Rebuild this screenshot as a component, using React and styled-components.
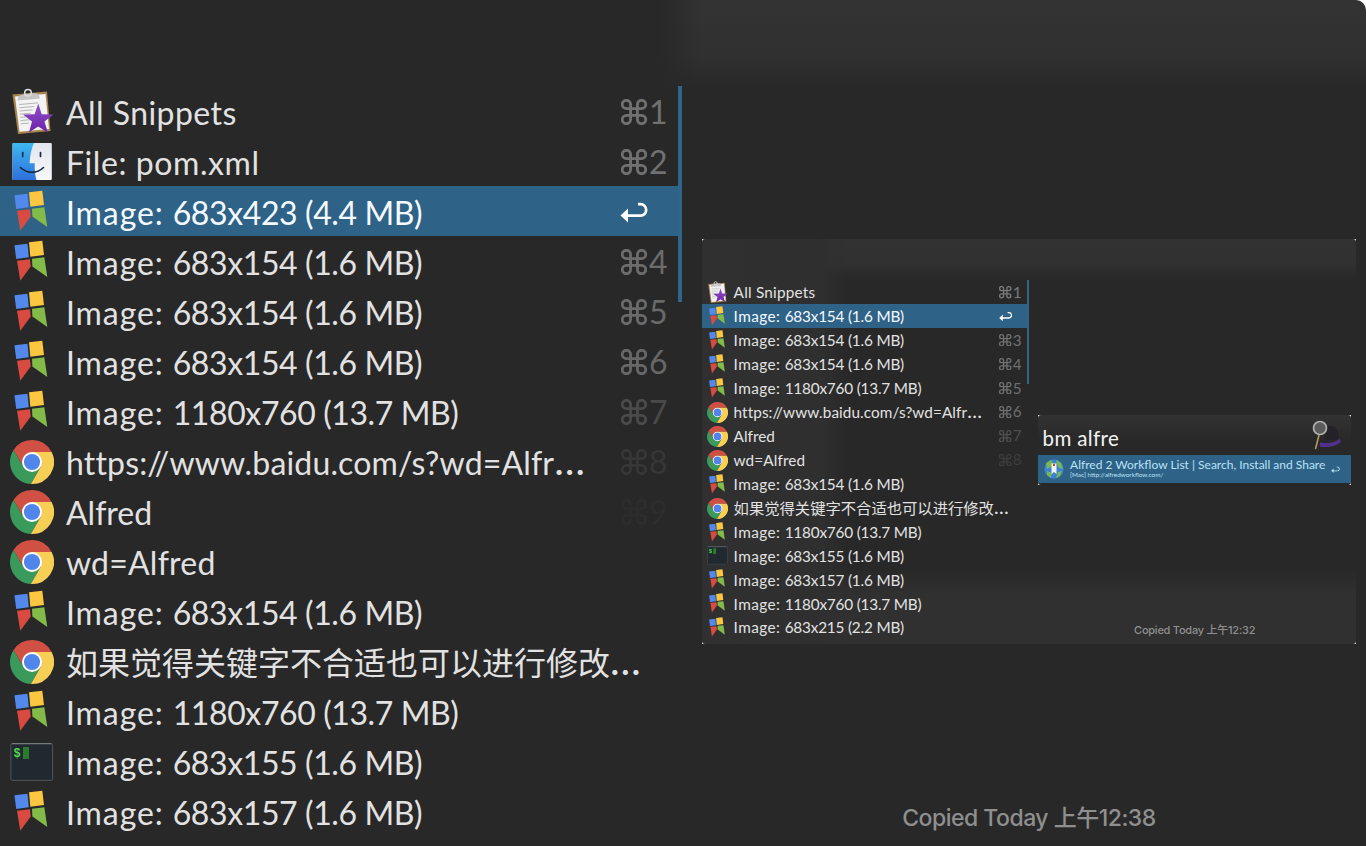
import React from "react";
import styled, { createGlobalStyle } from "styled-components";

const GlobalStyle = createGlobalStyle`
  * { box-sizing: border-box; }
  body { margin: 0; background: #fff; overflow: hidden; }
`;

/* Every length is in units of 1/32 em, so a window is resized by its font size. */
const u = (n) => `${n / 32}em`;

const WindowFrame = styled.div`
  display: flex;
  width: ${u(1366)};
  height: ${u(846)};
  font-family: Lato, "Noto Sans CJK SC", sans-serif;
  font-size: ${(p) => p.$size}px;
  color: #e2e2e2;
  background: ${(p) => p.$background};
  border-radius: ${(p) => p.$radius};
  overflow: hidden;
`;

const ListPane = styled.div`
  display: flex;
  width: ${u(682)};
  padding-top: ${u(86)};
`;

const List = styled.div`
  flex: 1;
  min-width: 0;
`;

const ScrollThumb = styled.div`
  width: ${u(4)};
  height: ${u(216)};
  background: #2f6588;
`;

const Row = styled.div`
  display: flex;
  align-items: center;
  height: ${u(50)};
  padding-left: ${u(10)};
  color: ${(p) => (p.$selected ? "#f4faff" : "#e2e2e2")};
  background: ${(p) => (p.$selected ? "#2f6287" : "transparent")};
`;

const IconSlot = styled.span`
  display: flex;
  flex: none;
  width: ${u(44)};
  height: ${u(50)};
  margin-right: ${u(12)};
  svg { width: 100%; height: 100%; }
`;

const LabelBox = styled.div`
  flex: 1;
  min-width: 0;
  padding-top: ${(p) => u(p.$drop)};
  line-height: ${u(50)};
  white-space: nowrap;
`;

const Segment = styled.span`
  letter-spacing: ${(p) => p.$track}em;
`;

const Ellipsis = styled.span`
  font-size: 1.28em;
  line-height: 0;
`;

const Shortcut = styled.div`
  display: flex;
  align-items: center;
  flex: none;
  width: ${u(58)};
  height: ${u(50)};
  padding: ${(p) => (p.$selected ? `${u(3)} 0 0` : `${u(1)} 0 0 ${u(0.8)}`)};
  color: ${(p) => p.$color};
`;

const CommandGlyph = styled.svg`
  flex: none;
  width: ${u(26)};
  height: ${u(26)};
  margin-right: ${u(2.2)};
`;

const ReturnGlyph = styled.svg`
  width: ${u(28)};
  height: ${u(24)};
`;

const Digit = styled.span`
  padding-top: ${u(1.5)};
  line-height: ${u(50)};
`;

const DetailPane = styled.div`
  display: flex;
  flex-direction: column;
  flex: 1;
  padding: ${u(86)} ${u(10)} 0 ${u(20)};
`;

const PreviewArea = styled.div`
  display: flex;
  align-items: center;
  height: ${u(711)};
`;

const Picture = styled.div`
  flex: 1;
  background: #e8e8e8;
`;

const CopiedAt = styled.div`
  display: flex;
  justify-content: center;
  align-items: center;
  height: ${u(42.5)};
  font-family: Inter, "Noto Sans CJK SC", sans-serif;
  color: #8f8f8f;
  white-space: nowrap;
`;

const CopiedText = styled.span`
  font-size: ${u(23)};
  font-weight: 500;
  line-height: 1;
  letter-spacing: -0.022em;
`;

const SearchBar = styled.div`
  width: 313px;
  height: 70px;
  border-radius: 3px;
  background: linear-gradient(#333 0, #282828 26px);
  font-family: Lato, sans-serif;
`;

const QueryLine = styled.div`
  display: flex;
  justify-content: space-between;
  height: 40px;
  padding: 0 7px 0 4.5px;
  font-size: 20.5px;
  line-height: 47px;
  letter-spacing: 0.018em;
  color: #f2f2f2;
`;

const ResultRow = styled.div`
  display: flex;
  align-items: center;
  height: 28px;
  padding: 0 11px 0 6px;
  gap: 6px;
  background: #2f6287;
  color: #b9e3f7;
`;

const ResultText = styled.div`
  flex: 1;
  padding-bottom: 1px;
  white-space: nowrap;
`;

const ResultTitle = styled.div`
  font-size: 12px;
  line-height: 13px;
`;

const ResultUrl = styled.div`
  font-size: 6.4px;
  line-height: 8px;
`;

const SnippetsIcon = () => (
  <svg viewBox="0 0 44 50">
    <path d="M2.5 8.5 37 5.5 40.5 45 8 48z" fill="#a8844f" />
    <path d="M5 10.5 35.5 8 39 43 9.5 45.7z" fill="#f3f3f3" />
    <path d="M9 18.5l19-1.6M9.3 21.8l15-1.3M9.6 25l13-1.2M9.9 28.2l11-1M10.2 31.4l10-.9M10.5 34.6l10-.9M10.8 37.8l8-.7" stroke="#b5b5b5" strokeWidth="1" />
    <path d="M7.5 14.5l1-4.5 6-2 9-1 5 1 1.5 4.5z" fill="#c4c4c4" />
    <circle cx="18" cy="6.7" r="3.3" fill="none" stroke="#dedede" strokeWidth="1.5" />
    <path d="M28.3 17.5l3.4 10.7 11.8.2-9 7.2 3.2 10.8-9.5-6-9.2 6 3-10.8-9-7 11.6-.4z" fill="url(#snipStar)" />
    <defs>
      <linearGradient id="snipStar" x1="0" y1="0" x2="0" y2="1">
        <stop offset="0" stopColor="#9350c8" />
        <stop offset="1" stopColor="#6a22ab" />
      </linearGradient>
    </defs>
  </svg>
);

const FinderIcon = () => (
  <svg viewBox="0 0 44 50">
    <defs>
      <linearGradient id="finderBlue" x1="0" y1="0" x2="0" y2="1">
        <stop offset="0" stopColor="#3db8f0" />
        <stop offset="1" stopColor="#2e70dc" />
      </linearGradient>
      <linearGradient id="finderWhite" x1="0" y1="0" x2="0" y2="1">
        <stop offset="0" stopColor="#e2e7ed" />
        <stop offset="1" stopColor="#f8f8fa" />
      </linearGradient>
    </defs>
    <rect x="2.5" y="7" width="39.3" height="37" rx="1" fill="url(#finderWhite)" />
    <path d="M3.5 7H24c-2.5 5.5-4 12-4.4 20.3h5.1c-.2 6 .3 11.5 1.7 16.7H3.5a1 1 0 0 1-1-1V8a1 1 0 0 1 1-1z" fill="url(#finderBlue)" />
    <path d="M12.7 16.5v4M30.5 16.5v4" stroke="#182d48" strokeWidth="1.7" strokeLinecap="round" />
    <path d="M10.5 31.5c6.5 6.3 16.5 6.3 23 0" fill="none" stroke="#14253b" strokeWidth="1.6" strokeLinecap="round" />
  </svg>
);

const FlagIcon = () => (
  <svg viewBox="0 0 44 50">
    <path d="M4.5 9.3l13-1.6 1.3 13.5-12.6 1.9z" fill="#5388ec" />
    <path d="M19 6.3l13.3-1.6L34 19l-13.7 1.8z" fill="#fbc640" />
    <path d="M7 24.7l13-1.4.7 7.2-10.4 14.2z" fill="#d94a41" />
    <path d="M22 22.7l12.3-1.4 3 19.7-14.9-10.5z" fill="#83bb49" />
  </svg>
);

const ChromeIcon = () => (
  <svg viewBox="-22 -26 44 50">
    <path d="M19.6-10A22 22 0 0 0-18.46-11.97L-8.66 5 0-10z" fill="#d05043" />
    <path d="M-18.46-11.97A22 22 0 0 0-1.14 21.97L8.66 5H-8.66z" fill="#3a9a5c" />
    <path d="M-1.14 21.97A22 22 0 0 0 19.6-10H0L8.66 5z" fill="#f8cf55" />
    <circle r="10" fill="#fff" />
    <circle r="8.1" fill="#5086ec" />
  </svg>
);

const TerminalIcon = () => (
  <svg viewBox="0 0 44 50">
    <rect x=".9" y="7.7" width="41.7" height="36.6" rx="1.5" fill="#20292f" stroke="#51575a" strokeWidth="1" />
    <path d="M2 7.7h39.5" stroke="#8d9294" strokeWidth=".8" />
    <rect x="13" y="11" width="6" height="12" fill="#2b7a30" />
    <text x="3.6" y="21" fontSize="12" fontWeight="700" fontFamily="Liberation Mono, monospace" fill="#4fd84c">$</text>
  </svg>
);

const CommandIcon = () => (
  <CommandGlyph viewBox="0 0 25 25" fill="none" stroke="currentColor" strokeWidth="2.7">
    <path d="M9.2 9.2V5.2a4 4 0 1 0-4 4H19.8a4 4 0 1 0-4-4V19.8a4 4 0 1 0 4-4H5.2a4 4 0 1 0 4 4z" />
  </CommandGlyph>
);

const ReturnIcon = () => (
  <ReturnGlyph viewBox="0 0 28 24">
    <path d="M18 3.2h2.5a5.6 5.6 0 0 1 0 11.4H6" fill="none" stroke="currentColor" strokeWidth="2.7" />
    <path d="M.5 14.5L8 7.5v14z" fill="currentColor" />
  </ReturnGlyph>
);

const HatSvg = styled.svg`
  width: 34px;
  height: 34px;
  margin-top: 3px;
`;

const HatIcon = () => (
  <HatSvg viewBox="0 0 34 34">
    <path d="M15 22c-1-9 0-14 5-14 7 0 9 5 9 14z" fill="#242226" />
    <path d="M10 24.5c7 1.5 16 0 20-4l.5 4c-5 4-14 5.5-21 4z" fill="#52308d" />
    <path d="M9 17L5.5 31" stroke="#b59d63" strokeWidth="1.6" />
    <circle cx="10" cy="10" r="6.5" fill="#5b5b5b" stroke="#b0b0b0" strokeWidth="1.7" />
  </HatSvg>
);

const GlobeSvg = styled.svg`
  width: 20px;
  height: 22px;
  flex: none;
`;

const GlobeIcon = () => (
  <GlobeSvg viewBox="0 0 20 22">
    <circle cx="10" cy="11" r="9.7" fill="#3b82d4" />
    <path d="M2 5l5-3 2 3-2 4-4 2zM12 2l5 3 2 6-4-1-2-4zM3 13l5 2-1 5-4-3zM14 14l4-1-2 5-4 2z" fill="#79b84c" />
    <path d="M7.5 5.5h5v10.5L10 14l-2.5 2z" fill="#f1f1f1" />
    <path d="M9 6h2v2H9z" fill="#ba4a3d" />
  </GlobeSvg>
);

const SmallReturn = styled.span`
  display: flex;
  padding-top: 2px;
  svg { width: 9px; height: 8px; }
`;

const icons = {
  snippets: SnippetsIcon,
  finder: FinderIcon,
  flag: FlagIcon,
  chrome: ChromeIcon,
  terminal: TerminalIcon,
};

/* Labels are lists of [text, tracking] segments. */
const image = (dimensions, bytes, icon = "flag") => ({
  icon,
  label: [["Image: ", 0.028], [`${dimensions} `, -0.0125], [`(${bytes} MB)`, -0.0125]],
});

const snippets = { icon: "snippets", label: [["All Snippets", 0.014]] };
const pom = { icon: "finder", label: [["File: pom.xml", 0.018]] };
const baidu = { icon: "chrome", label: [["https://www.baidu.com/s?wd=Alfr", 0.005]], clipped: true };
const alfred = { icon: "chrome", label: [["Alfred", 0]] };
const wdAlfred = { icon: "chrome", label: [["wd=Alfred", 0.007]] };
const chinese = { icon: "chrome", label: [["如果觉得关键字不合适也可以进行修改", 0]], clipped: true };
const small = image("683x154", "1.6");
const large = image("1180x760", "13.7");
const terminal = image("683x155", "1.6", "terminal");
const flag157 = image("683x157", "1.6");

const mainRows = [
  snippets, pom, image("683x423", "4.4"), small, small, small, large, baidu,
  alfred, wdAlfred, small, chinese, large, terminal, flag157,
];

const innerRows = [
  snippets, small, small, small, large, baidu, alfred, wdAlfred,
  small, chinese, large, terminal, flag157, large, image("683x215", "2.2"),
];

const mainFade = ["#717171", "#717171", "#fff", "#6c6c6c", "#6a6a6a", "#676767", "#4a4a4a", "#363636", "#2d2d2d"];
const innerFade = ["#7a7a7a", "#fff", "#6f6f6f", "#6f6f6f", "#6f6f6f", "#6c6c6c", "#4f4f4f", "#3d3d3d"];

function HistoryWindow({ size, background, radius, rows, drop, selected, fade, copied, children }) {
  return (
    <WindowFrame $size={size} $background={background} $radius={radius}>
      <ListPane>
        <List>
          {rows.map((row, i) => {
            const Icon = icons[row.icon];
            return (
              <Row key={i} $selected={i === selected}>
                <IconSlot><Icon /></IconSlot>
                <LabelBox $drop={drop}>
                  {row.label.map(([text, track]) => (
                    <Segment key={text} $track={track}>{text}</Segment>
                  ))}
                  {row.clipped && <Ellipsis>…</Ellipsis>}
                </LabelBox>
                {i < fade.length && (
                  <Shortcut $color={fade[i]} $selected={i === selected}>
                    {i === selected ? <ReturnIcon /> : <><CommandIcon /><Digit>{i + 1}</Digit></>}
                  </Shortcut>
                )}
              </Row>
            );
          })}
        </List>
        <ScrollThumb />
      </ListPane>
      <DetailPane>
        <PreviewArea><Picture>{children}</Picture></PreviewArea>
        <CopiedAt><CopiedText>{copied}</CopiedText></CopiedAt>
      </DetailPane>
    </WindowFrame>
  );
}

const mainBackground =
  "linear-gradient(90deg, #282828 0, #282828 660px, transparent 700px), linear-gradient(#333 0, #303030 55px, #282828 88px)";
const innerBackground =
  "linear-gradient(90deg, #303030 0, #2f2f2f 120px, transparent 145px), linear-gradient(#323232 0, #313131 24px, #282828 40px, #282828 330px, #303030 355px)";

export default function App() {
  return (
    <>
      <GlobalStyle />
      <HistoryWindow
        size={32}
        background={mainBackground}
        radius="0 10px 0 0"
        rows={mainRows}
        drop={3.5}
        selected={2}
        fade={mainFade}
        copied="Copied Today 上午12:38"
      >
        <HistoryWindow
          size={15.32}
          background={innerBackground}
          radius="3px"
          rows={innerRows}
          drop={5}
          selected={1}
          fade={innerFade}
          copied="Copied Today 上午12:32"
        >
          <SearchBar>
            <QueryLine>bm alfre<HatIcon /></QueryLine>
            <ResultRow>
              <GlobeIcon />
              <ResultText>
                <ResultTitle>Alfred 2 Workflow List | Search, Install and Share</ResultTitle>
                <ResultUrl>[Mac] http://alfredworkflow.com/</ResultUrl>
              </ResultText>
              <SmallReturn><ReturnIcon /></SmallReturn>
            </ResultRow>
          </SearchBar>
        </HistoryWindow>
      </HistoryWindow>
    </>
  );
}
